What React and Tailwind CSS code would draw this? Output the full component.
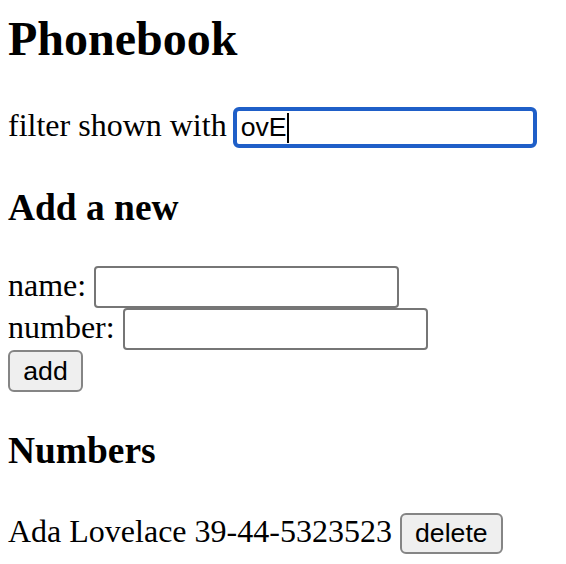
import React from 'react'

function Row({ label, gap = 'gap-[8px]', children }) {
  return (
    <div className={'flex items-baseline ' + gap}>
      <span>{label}</span>
      {children}
    </div>
  )
}

function TextBox() {
  return (
    <input
      type="text"
      className="w-[305px] h-[42px] border-2 border-[#767676] rounded-[4px] bg-white px-[4px] text-[26.67px] leading-[normal] outline-none"
      style={{ fontFamily: '"Liberation Sans", Arial, sans-serif' }}
    />
  )
}

export default function App() {
  const sans = '"Liberation Sans", Arial, sans-serif'
  return (
    <div
      className="bg-white text-black text-[32px] leading-[normal] pl-[8px] pt-[11px] min-h-[564px]"
      style={{ fontFamily: '"Liberation Serif", "Times New Roman", serif' }}
    >
      <h1 className="text-[48px] font-bold leading-[56px]">Phonebook</h1>

      <div className="mt-[40px]">
        <Row label="filter shown with" gap="gap-[6px]">
          <div
            className="w-[304px] h-[41px] flex items-center border-[4px] border-[#1f5fc8] rounded-[6px] bg-white px-[4px] text-[26.67px]"
            style={{ fontFamily: sans }}
          >
            <span>ovE</span>
            <span className="inline-block w-[2px] h-[30px] bg-black"></span>
          </div>
        </Row>
      </div>

      <h3 className="mt-[38px] text-[37.44px] font-bold leading-[43px]">Add a new</h3>

      <form className="mt-[37px]">
        <Row label="name:">
          <TextBox />
        </Row>
        <Row label="number:">
          <TextBox />
        </Row>
        <div className="flex">
          <button
            type="button"
            className="w-[75px] h-[42px] border-2 border-[#858585] rounded-[6px] bg-[#efefef] text-[26.67px] leading-none"
            style={{ fontFamily: sans }}
          >
            add
          </button>
        </div>
      </form>

      <h3 className="mt-[37px] text-[37.44px] font-bold leading-[43px]">Numbers</h3>

      <div className="mt-[41px]">
        <Row label="Ada Lovelace 39-44-5323523">
          <button
            type="button"
            className="w-[103px] h-[41px] border-2 border-[#858585] rounded-[6px] bg-[#efefef] text-[26.67px] leading-none"
            style={{ fontFamily: sans }}
          >
            delete
          </button>
        </Row>
      </div>
    </div>
  )
}
